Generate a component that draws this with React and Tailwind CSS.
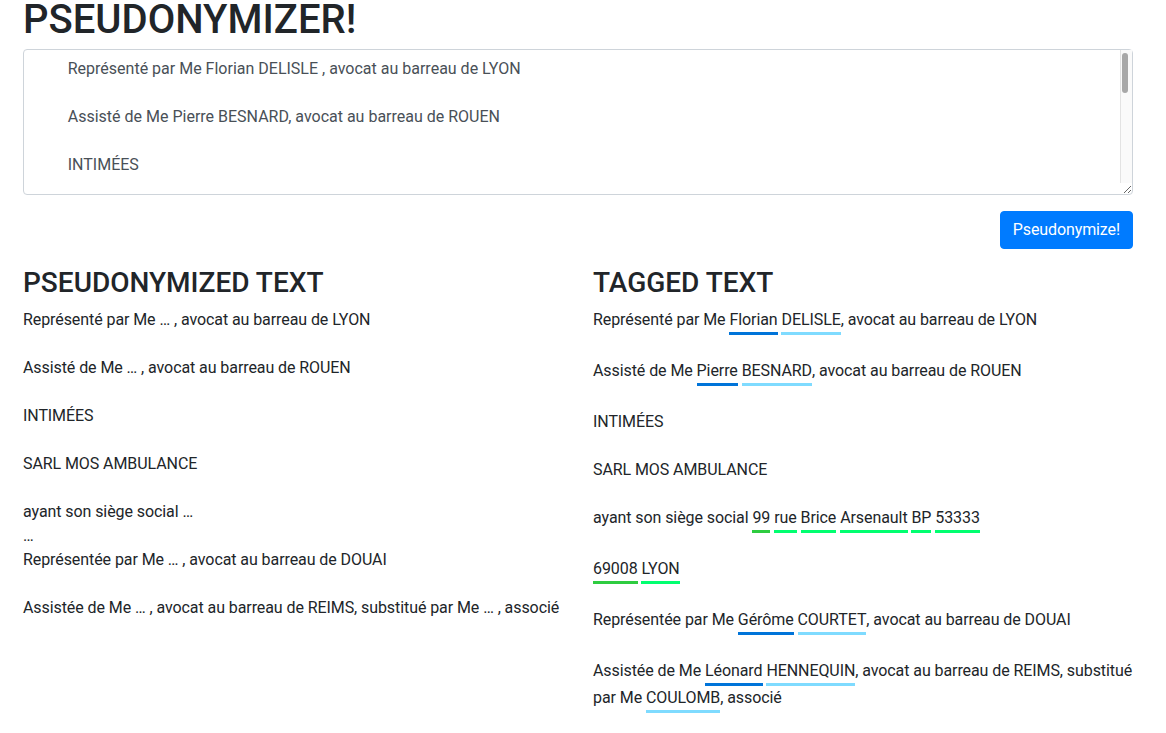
import React from 'react';

const source = `        Représenté par Me Florian DELISLE , avocat au barreau de LYON

        Assisté de Me Pierre BESNARD, avocat au barreau de ROUEN

        INTIMÉES

        SARL MOS AMBULANCE

        ayant son siège social 99 rue Brice Arsenault BP 53333

        69008 LYON

        Représentée par Me Gérôme COURTET, avocat au barreau de DOUAI

        Assistée de Me Léonard HENNEQUIN, avocat au barreau de REIMS, substitué par Me COULOMB, associé`;

const pseudonymized = `Représenté par Me … , avocat au barreau de LYON

Assisté de Me … , avocat au barreau de ROUEN

INTIMÉES

SARL MOS AMBULANCE

ayant son siège social …
…
Représentée par Me … , avocat au barreau de DOUAI

Assistée de Me … , avocat au barreau de REIMS, substitué par Me … , associé`;

// tag colours
const colors = {
    first: 'border-[#0074d9]',
    last: 'border-[#7fdbff]',
    num: 'border-[#2ecc40]',
    addr: 'border-[#01ff70]',
};

const tagged = [
    'Représenté par Me ', ['Florian', 'first'], ' ', ['DELISLE', 'last'], ', avocat au barreau de LYON\n\n',
    'Assisté de Me ', ['Pierre', 'first'], ' ', ['BESNARD', 'last'], ', avocat au barreau de ROUEN\n\n',
    'INTIMÉES\n\n',
    'SARL MOS AMBULANCE\n\n',
    'ayant son siège social ', ['99', 'num'], ' ', ['rue', 'addr'], ' ', ['Brice', 'addr'], ' ', ['Arsenault', 'addr'], ' ', ['BP', 'addr'], ' ', ['53333', 'addr'], '\n\n',
    ['69008', 'num'], ' ', ['LYON', 'addr'], '\n\n',
    'Représentée par Me ', ['Gérôme', 'first'], ' ', ['COURTET', 'last'], ', avocat au barreau de DOUAI\n\n',
    'Assistée de Me ', ['Léonard', 'first'], ' ', ['HENNEQUIN', 'last'], ', avocat au barreau de REIMS, substitué par Me ', ['COULOMB', 'last'], ', associé',
];

function Tag({ text, kind }) {
    return (
        <span className={'inline-block border-b-[3px] leading-6 ' + colors[kind]}>{text}</span>
    );
}

export default function App() {
    return (
        <div className="font-['Roboto',sans-serif] text-[#212529] text-base leading-6 bg-white min-h-screen">
            <div className="pl-[23px] w-[1133px]">
                <h1 className="text-[40px] leading-[40px] font-medium mb-[9px]">PSEUDONYMIZER!</h1>
                <div className="relative">
                    <textarea
                        defaultValue={source}
                        className="block w-full h-[146px] border border-[#ced4da] rounded pl-3 pr-[24px] pt-[7px] pb-1.5 text-[#495057] leading-6"
                    />
                    {/* scrollbar, hidden by the headless browser */}
                    <div className="absolute top-px right-px bottom-[12px] w-[12px] border-l border-[#e3e3e3] bg-[#fafafa] pointer-events-none">
                        <div className="mt-[3px] ml-[1px] w-[6px] h-[40px] rounded-full bg-[#a8a8a8]" />
                    </div>
                </div>
                <div className="flex justify-end mt-[16px]">
                    <button className="bg-[#007bff] border border-[#007bff] text-white rounded px-3 py-1.5 leading-6 tracking-[-0.1px]">Pseudonymize!</button>
                </div>
                <div className="grid grid-cols-[570px_548px] mt-[17px]">
                    <div className="pr-[10px]">
                        <h2 className="text-[28px] leading-[33.6px] font-medium mb-2">PSEUDONYMIZED TEXT</h2>
                        <div className="whitespace-pre-wrap tracking-[-0.08px]">{pseudonymized}</div>
                    </div>
                    <div>
                        <h2 className="text-[28px] leading-[33.6px] font-medium mb-2">TAGGED TEXT</h2>
                        <div className="whitespace-pre-wrap tracking-[-0.08px]">
                            {tagged.map((seg, i) =>
                                typeof seg === 'string' ? <React.Fragment key={i}>{seg}</React.Fragment> : <Tag key={i} text={seg[0]} kind={seg[1]} />
                            )}
                        </div>
                    </div>
                </div>
            </div>
        </div>
    );
}
